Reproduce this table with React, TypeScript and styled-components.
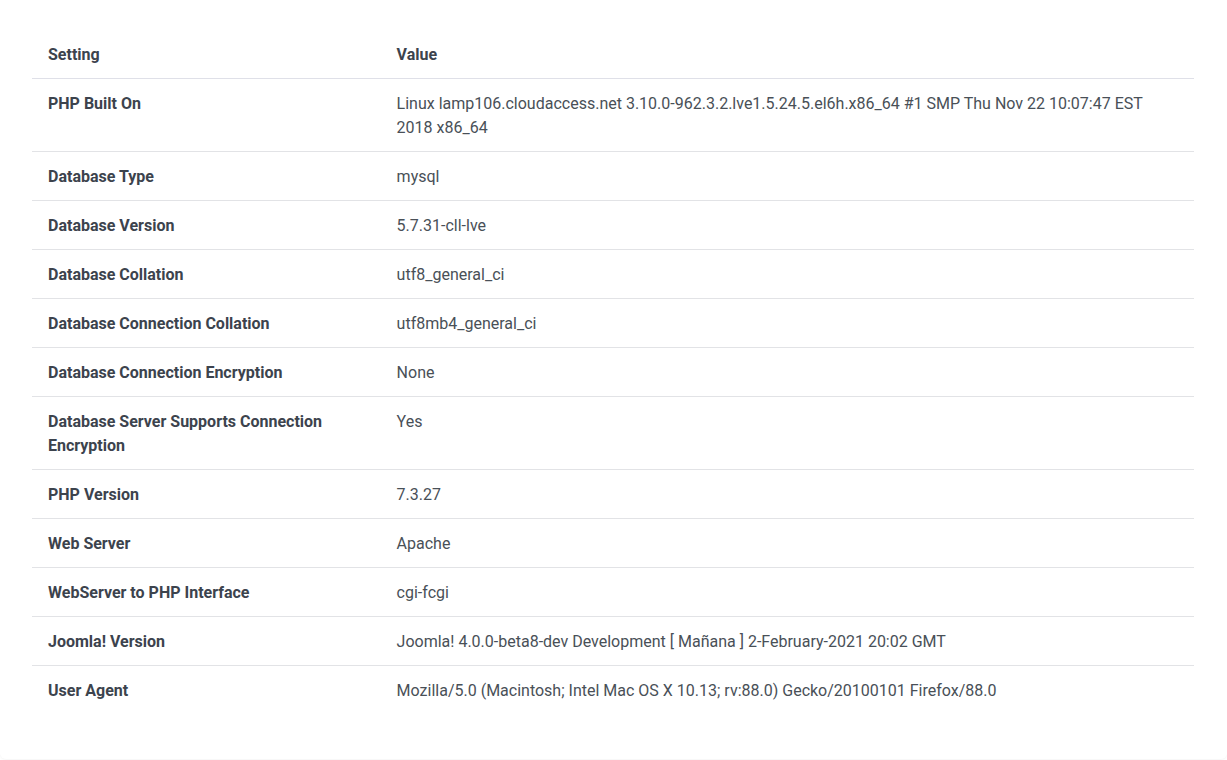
import React from 'react';
import styled, { createGlobalStyle } from 'styled-components';

const GlobalStyle = createGlobalStyle`
	html, body {
		margin: 0;
		padding: 0;
		background: #ffffff;
	}
	body {
		font-family: Roboto, "Liberation Sans", Arial, sans-serif;
		-webkit-font-smoothing: antialiased;
	}
`;

interface InfoRow {
	setting: string;
	value: string;
}

const rows: InfoRow[] = [
	{ setting: 'PHP Built On', value: 'Linux lamp106.cloudaccess.net 3.10.0-962.3.2.lve1.5.24.5.el6h.x86_64 #1 SMP Thu Nov 22 10:07:47 EST 2018 x86_64' },
	{ setting: 'Database Type', value: 'mysql' },
	{ setting: 'Database Version', value: '5.7.31-cll-lve' },
	{ setting: 'Database Collation', value: 'utf8_general_ci' },
	{ setting: 'Database Connection Collation', value: 'utf8mb4_general_ci' },
	{ setting: 'Database Connection Encryption', value: 'None' },
	{ setting: 'Database Server Supports Connection Encryption', value: 'Yes' },
	{ setting: 'PHP Version', value: '7.3.27' },
	{ setting: 'Web Server', value: 'Apache' },
	{ setting: 'WebServer to PHP Interface', value: 'cgi-fcgi' },
	{ setting: 'Joomla! Version', value: 'Joomla! 4.0.0-beta8-dev Development [ Mañana ] 2-February-2021 20:02 GMT' },
	{ setting: 'User Agent', value: 'Mozilla/5.0 (Macintosh; Intel Mac OS X 10.13; rv:88.0) Gecko/20100101 Firefox/88.0' },
];

export default function App() {
	return (
		<>
			<GlobalStyle />
			<Card>
				<Table>
					<colgroup>
						<col style={{ width: '30%' }} />
						<col />
					</colgroup>
					<thead>
						<tr>
							<HeadCell>Setting</HeadCell>
							<HeadCell>Value</HeadCell>
						</tr>
					</thead>
					<tbody>
						{rows.map((row, i) => (
							<Row key={row.setting} $last={i === rows.length - 1}>
								<LabelCell>{row.setting}</LabelCell>
								<ValueCell>{row.value}</ValueCell>
							</Row>
						))}
					</tbody>
				</Table>
			</Card>
		</>
	);
}

const Card = styled.div`
	background: #ffffff;
	padding: 30px 33px 45px 32px;
	border-radius: 0 0 6px 6px;
	box-shadow: 0 1px 2px rgba(0, 0, 0, 0.04);
	margin-bottom: 1px;
`;

const Table = styled.table`
	width: 100%;
	border-collapse: collapse;
	table-layout: fixed;
	font-size: 16px;
	line-height: 24px;
	color: #495057;
`;

const HeadCell = styled.th`
	text-align: left;
	font-weight: 700;
	color: #3c434d;
	padding: 13px 16px 11px;
	border-bottom: 1px solid #dfe0e8;
	vertical-align: top;
`;

const Row = styled.tr<{ $last?: boolean }>`
	border-bottom: ${p => (p.$last ? 'none' : '1px solid #e2e3e6')};
`;

const LabelCell = styled.th`
	text-align: left;
	font-weight: 700;
	color: #3c434d;
	padding: 13px 16px 11px;
	vertical-align: top;
`;

const ValueCell = styled.td`
	padding: 13px 16px 11px;
	vertical-align: top;
	color: #495057;
`;
